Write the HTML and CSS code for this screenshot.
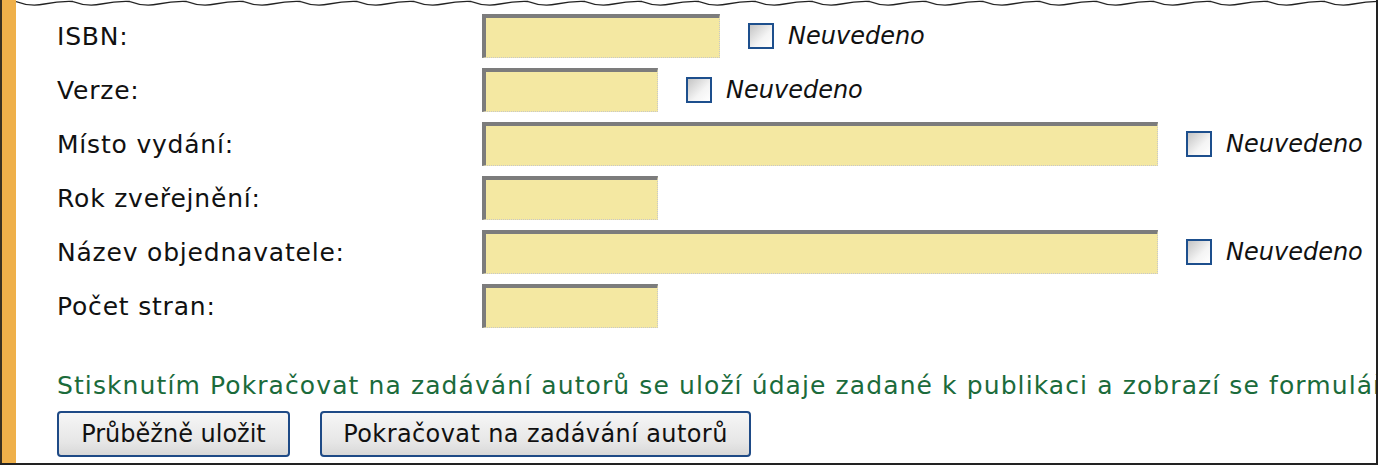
FILE: index.html
```html
<!DOCTYPE html>
<html lang="cs">

<head>
  <meta charset="UTF-8" />
  <meta name="viewport" content="width=device-width, initial-scale=1.0" />
  <title>Údaje o publikaci</title>
  <link rel="stylesheet" href="styles.css">
</head>

<body>

  <div class="sheet">
    <div class="stripe"></div>

    <div class="page">
      <!-- torn paper edge -->
      <svg class="tear" width="1362" height="8" viewBox="0 0 1362 8" preserveAspectRatio="none">
        <defs>
          <pattern id="wave" width="57" height="8" patternUnits="userSpaceOnUse">
            <path d="M0 1.5 Q14 7 28.5 4 Q43 1 57 1.5" fill="none" stroke="#222" stroke-width="1.3" />
          </pattern>
        </defs>
        <rect width="1362" height="8" fill="url(#wave)" />
      </svg>

      <form class="form">
        <div class="row">
          <label for="isbn">ISBN:</label>
          <div class="field">
            <input id="isbn" class="input mid" type="text">
            <label class="na"><span class="box"></span><i>Neuvedeno</i></label>
          </div>
        </div>

        <div class="row">
          <label for="verze">Verze:</label>
          <div class="field">
            <input id="verze" class="input short" type="text">
            <label class="na"><span class="box"></span><i>Neuvedeno</i></label>
          </div>
        </div>

        <div class="row">
          <label for="misto">Místo vydání:</label>
          <div class="field">
            <input id="misto" class="input long" type="text">
            <label class="na"><span class="box"></span><i>Neuvedeno</i></label>
          </div>
        </div>

        <div class="row">
          <label for="rok">Rok zveřejnění:</label>
          <div class="field">
            <input id="rok" class="input short" type="text">
          </div>
        </div>

        <div class="row">
          <label for="objednavatel">Název objednavatele:</label>
          <div class="field">
            <input id="objednavatel" class="input long" type="text">
            <label class="na"><span class="box"></span><i>Neuvedeno</i></label>
          </div>
        </div>

        <div class="row">
          <label for="strany">Počet stran:</label>
          <div class="field">
            <input id="strany" class="input short" type="text">
          </div>
        </div>

        <p class="note">Stisknutím Pokračovat na zadávání autorů se uloží údaje zadané k publikaci a zobrazí se formulář</p>

        <div class="actions">
          <button type="button" class="btn save">Průběžně uložit</button>
          <button type="button" class="btn next">Pokračovat na zadávání autorů</button>
        </div>
      </form>
    </div>
  </div>

</body>

</html>
```

FILE: styles.css
```css
* {
  box-sizing: border-box;
  margin: 0;
  padding: 0;
}

body {
  font-family: "DejaVu Sans", Verdana, sans-serif;
  color: #111;
  background: #fff;
  width: 1380px;
  height: 466px;
  overflow: hidden;
}

.sheet {
  display: flex;
  width: 1378px;
  height: 465px;
  border-right: 2px solid #222;
  border-bottom: 2px solid #222;
}

.stripe {
  width: 16px;
  flex: none;
  background: #efb04a;
  border-left: 2px solid #3a3020;
}

.page {
  flex: 1;
  min-width: 0;
  overflow: hidden;
}

.tear {
  display: block;
  width: 100%;
  height: 8px;
}

.form {
  padding: 6px 0 0 41px;
  font-size: 25px;
}

.row {
  display: grid;
  grid-template-columns: 425px auto;
  align-items: center;
  height: 44px;
  margin-bottom: 10px;
  letter-spacing: 0.8px;
}

.field {
  display: flex;
  align-items: center;
}

.input {
  height: 44px;
  background: #f4e8a2;
  border-top: 4px solid #7c7c7c;
  border-left: 4px solid #7c7c7c;
  border-right: 1px dotted #c8c8c8;
  border-bottom: 1px dotted #c8c8c8;
  font: inherit;
}

.input.short {
  width: 176px;
}

.input.mid {
  width: 238px;
}

.input.long {
  width: 676px;
}

.na {
  display: flex;
  align-items: center;
  margin-left: 28px;
}

.na i {
  margin-left: 14px;
  font-size: 24px;
  letter-spacing: 0;
}

.box {
  width: 26px;
  height: 26px;
  border: 2px solid #1d4f8d;
  background: linear-gradient(135deg, #c4c4c4, #f4f4f4 60%, #fff);
}

.note {
  margin-top: 44px;
  line-height: 28px;
  color: #1b6b3b;
  white-space: nowrap;
  letter-spacing: 1.1px;
}

.actions {
  display: flex;
  gap: 30px;
  margin-top: 11px;
}

.btn {
  height: 46px;
  font: inherit;
  font-size: 24px;
  color: #111;
  border: 2px solid #1e4a86;
  border-radius: 4px;
  background: linear-gradient(#f6f6f6, #e6e6e6 70%, #d8d8d8);
}

.btn.save {
  width: 233px;
}

.btn.next {
  width: 431px;
  letter-spacing: 0.4px;
}
```
